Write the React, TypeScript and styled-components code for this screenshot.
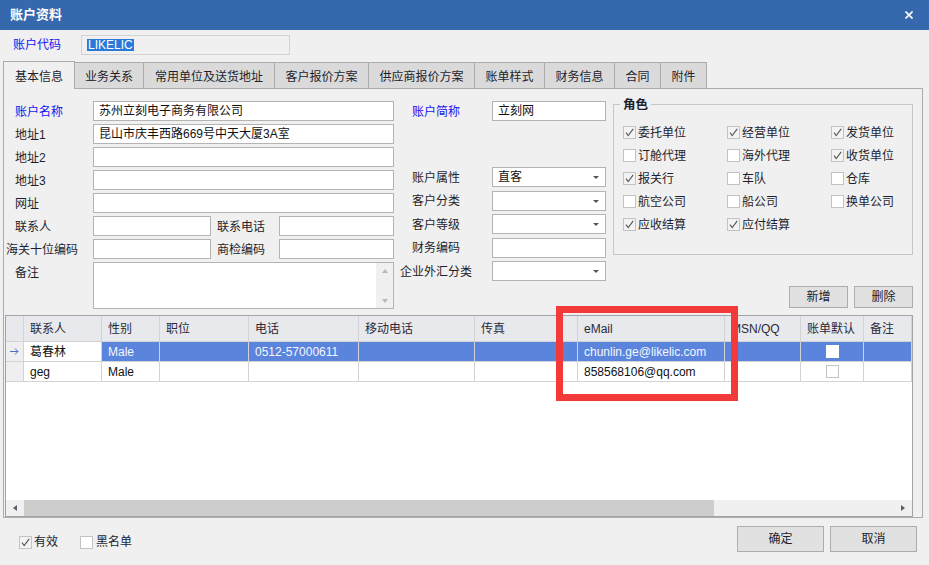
import React from "react";
import styled, { createGlobalStyle } from "styled-components";

const GlobalStyle = createGlobalStyle`
  html, body {
    margin: 0;
    padding: 0;
    background: #f0f0f0;
  }
  body {
    font-family: "Liberation Sans", "Noto Sans CJK SC", sans-serif;
    font-size: 12px;
    line-height: 16px;
    color: #1e1e2d;
  }
  * {
    box-sizing: border-box;
  }
`;

const Window = styled.div`
  position: relative;
  width: 929px;
  height: 565px;
  overflow: hidden;
  background: #f0f0f0;
  display: flex;
  flex-direction: column;
`;

const TitleBar = styled.div`
  height: 30px;
  flex: none;
  background: #3568ad;
  color: #fff;
  display: flex;
  align-items: center;
  justify-content: space-between;
  padding: 0 16px 0 10px;
  font-size: 13px;
  font-weight: bold;
`;

const CodeRow = styled.div`
  display: flex;
  align-items: center;
  height: 20px;
  margin-top: 5px;
  padding-left: 13px;
`;

const CodeLabel = styled.span`
  width: 68px;
  color: #1414f0;
`;

const CodeInput = styled.div`
  width: 209px;
  height: 20px;
  border: 1px solid #d2d2d2;
  background: #f0f0f0;
  padding-left: 5px;
  display: flex;
  align-items: center;
`;

const Selected = styled.span`
  background: #2a79d8;
  color: #fff;
  line-height: 12px;
  padding: 0 1px;
`;

const TabStrip = styled.div`
  display: flex;
  align-items: flex-end;
  height: 27px;
  margin-top: 6px;
  padding-left: 3px;
  flex: none;
`;

const Tab = styled.div<{ $active?: boolean; $w: number }>`
  position: relative;
  display: flex;
  align-items: center;
  justify-content: center;
  width: ${(p) => p.$w}px;
  padding-top: 2px;
  height: ${(p) => (p.$active ? 28 : 26)}px;
  margin-left: ${(p) => (p.$active ? 0 : -1)}px;
  margin-bottom: ${(p) => (p.$active ? -1 : 0)}px;
  border: 1px solid #acacac;
  border-bottom: none;
  background: ${(p) => (p.$active ? "#f0f0f0" : "#dadada")};
  z-index: ${(p) => (p.$active ? 2 : 1)};
  white-space: nowrap;
`;

const Panel = styled.div`
  margin: 0 6px 0 3px;
  height: 430px;
  flex: none;
  border: 1px solid #acacac;
  padding-top: 12px;
  display: flex;
  flex-direction: column;
`;

const TopArea = styled.div`
  display: flex;
  height: 208px;
  flex: none;
`;

const LeftForm = styled.div`
  display: grid;
  grid-template-columns: 89px 118px 68px 115px;
  grid-template-rows: repeat(7, 20px) 47px;
  row-gap: 3px;
`;

const FormLabel = styled.div<{ $blue?: boolean; $pull?: number; $pad?: number; $top?: boolean }>`
  display: flex;
  align-items: ${(p) => (p.$top ? "flex-start" : "center")};
  padding-top: ${(p) => (p.$top ? 3 : 1)}px;
  padding-left: ${(p) => p.$pad ?? 11}px;
  margin-left: ${(p) => -(p.$pull ?? 0)}px;
  white-space: nowrap;
  color: ${(p) => (p.$blue ? "#1414f0" : "#1e1e2d")};
`;

const Field = styled.div<{ $span?: string }>`
  grid-column: ${(p) => p.$span ?? "auto"};
  position: relative;
  background: #fff;
  border: 1px solid #b4b4b4;
  padding-left: 5px;
  display: flex;
  align-items: center;
  white-space: nowrap;
  overflow: hidden;
  color: #111;
`;

const DropArrow = styled.span`
  position: absolute;
  right: 6px;
  top: 8px;
  width: 0;
  height: 0;
  border-left: 3px solid transparent;
  border-right: 3px solid transparent;
  border-top: 3px solid #555;
`;

const MemoScroll = styled.div`
  margin-left: auto;
  align-self: stretch;
  width: 17px;
  background: #f0f0f0;
  display: flex;
  flex-direction: column;
  justify-content: space-between;
  align-items: center;
  padding: 6px 0 5px;
`;

const ScrollTri = styled.span<{ $dir: "up" | "down" | "left" | "right"; $color?: string }>`
  width: 0;
  height: 0;
  ${(p) => {
    const c = p.$color ?? "#b8b8b8";
    if (p.$dir === "up")
      return `border-left:3px solid transparent;border-right:3px solid transparent;border-bottom:4px solid ${c};`;
    if (p.$dir === "down")
      return `border-left:3px solid transparent;border-right:3px solid transparent;border-top:4px solid ${c};`;
    if (p.$dir === "left")
      return `border-top:3px solid transparent;border-bottom:3px solid transparent;border-right:4px solid ${c};`;
    return `border-top:3px solid transparent;border-bottom:3px solid transparent;border-left:4px solid ${c};`;
  }}
`;

const MiddleForm = styled.div`
  width: 212px;
  display: flex;
  flex-direction: column;
  gap: 3.5px;
`;

const MidRow = styled.div`
  display: grid;
  grid-template-columns: 98px 114px;
  height: 20px;
`;

const MidSpacer = styled.div`
  height: 39px;
`;

const RightCol = styled.div`
  width: 300px;
  margin-left: 7px;
  display: flex;
  flex-direction: column;
  justify-content: space-between;
  padding: 3px 0 1px;
`;

const GroupBox = styled.div`
  position: relative;
  height: 151px;
  border: 1px solid #c6c6c6;
  padding: 16px 0 0 9px;
`;

const Legend = styled.span`
  position: absolute;
  top: -8px;
  left: 6px;
  padding: 0 3px;
  background: #f0f0f0;
  font-weight: bold;
  font-size: 12.5px;
  line-height: 16px;
`;

const RoleGrid = styled.div`
  display: grid;
  grid-template-columns: 104px 104px 1fr;
  grid-auto-rows: 23px;
`;

const CheckItem = styled.label<{ $gap?: number }>`
  display: flex;
  align-items: center;
  gap: ${(p) => p.$gap ?? 2}px;
  white-space: nowrap;
`;

const Box = styled.span<{ $checked?: boolean; $plain?: boolean }>`
  width: 13px;
  height: 13px;
  flex: none;
  border: 1px solid ${(p) => (p.$plain ? "#fff" : "#c3c3c3")};
  background: ${(p) => (p.$checked ? "#f3f3f3" : "#fff")};
  display: inline-flex;
  align-items: center;
  justify-content: center;
`;

const ButtonRow = styled.div`
  display: flex;
  justify-content: flex-end;
  gap: 6px;
`;

const Button = styled.div<{ $large?: boolean }>`
  width: ${(p) => (p.$large ? 87 : 59)}px;
  height: ${(p) => (p.$large ? 26 : 22)}px;
  background: #e1e1e1;
  border: 1px solid #adadad;
  display: flex;
  align-items: center;
  justify-content: center;
  color: #1e1e2d;
`;

const DataGrid = styled.div`
  margin: 6px 0 0 1px;
  width: 908px;
  height: 202px;
  border: 1px solid #a3a3a6;
  background: #fff;
  display: flex;
  flex-direction: column;
`;

const GridRow = styled.div<{ $header?: boolean }>`
  display: grid;
  grid-template-columns: 18px 78px 58px 89px 110px 116px 103px 147px 76px 63px 1fr;
  height: ${(p) => (p.$header ? 26 : 20)}px;
  flex: none;
`;

const Cell = styled.div<{
  $kind?: "header" | "indicator" | "selected" | "plain";
  $center?: boolean;
}>`
  border-right: 1px solid #d3d3d6;
  border-bottom: 1px solid #d3d3d6;
  padding-left: ${(p) => (p.$center ? 0 : 6)}px;
  padding-top: ${(p) => (p.$kind === "header" ? 1 : 0)}px;
  display: flex;
  align-items: center;
  justify-content: ${(p) => (p.$center ? "center" : "flex-start")};
  white-space: nowrap;
  overflow: hidden;
  background: ${(p) =>
    p.$kind === "header"
      ? "#e8e9ec"
      : p.$kind === "indicator"
      ? "#efeff1"
      : p.$kind === "selected"
      ? "#5b84dd"
      : "#fff"};
  color: ${(p) => (p.$kind === "selected" ? "#f4f7ff" : p.$kind === "header" ? "#2a2a3a" : "#111")};
`;

const GridFill = styled.div`
  flex: 1;
`;

const HScroll = styled.div`
  height: 16px;
  flex: none;
  display: flex;
  background: #f0f0f0;
`;

const ScrollBtn = styled.div`
  width: 18px;
  display: flex;
  align-items: center;
  justify-content: center;
`;

const ScrollThumb = styled.div<{ $w: number }>`
  width: ${(p) => p.$w}px;
  background: #cdcdcd;
`;

const ScrollTrack = styled.div`
  flex: 1;
`;

const BottomBar = styled.div`
  flex: 1;
  display: flex;
  justify-content: space-between;
  align-items: flex-start;
  padding: 8px 12px 0 19px;
`;

const BottomChecks = styled.div`
  display: flex;
  gap: 22px;
  margin-top: 8px;
`;

const Highlight = styled.div`
  position: absolute;
  left: 556px;
  top: 306px;
  width: 182px;
  height: 95px;
  border: 7px solid #f33a3a;
  pointer-events: none;
`;

const Check = ({ checked, plain }: { checked?: boolean; plain?: boolean }) => (
  <Box $checked={checked} $plain={plain}>
    {checked && (
      <svg width="9" height="9" viewBox="0 0 9 9">
        <path d="M1 4.6 L3.2 7.6 L8.2 0.8" stroke="#555" strokeWidth="1.1" fill="none" />
      </svg>
    )}
  </Box>
);

const tabs: [string, number][] = [
  ["基本信息", 72],
  ["业务关系", 70],
  ["常用单位及送货地址", 132],
  ["客户报价方案", 95],
  ["供应商报价方案", 107],
  ["账单样式", 71],
  ["财务信息", 71],
  ["合同", 47],
  ["附件", 47],
];

const roles: [string, boolean][] = [
  ["委托单位", true],
  ["经营单位", true],
  ["发货单位", true],
  ["订舱代理", false],
  ["海外代理", false],
  ["收货单位", true],
  ["报关行", true],
  ["车队", false],
  ["仓库", false],
  ["航空公司", false],
  ["船公司", false],
  ["换单公司", false],
  ["应收结算", true],
  ["应付结算", true],
];

const headers = ["联系人", "性别", "职位", "电话", "移动电话", "传真", "eMail", "MSN/QQ", "账单默认", "备注"];

const contacts = [
  { name: "葛春林", sex: "Male", phone: "0512-57000611", email: "chunlin.ge@likelic.com", selected: true },
  { name: "geg", sex: "Male", phone: "", email: "858568106@qq.com", selected: false },
];

const RowArrow = () => (
  <svg width="9" height="7" viewBox="0 0 9 7">
    <path d="M0 3.5 H8 M5 0.5 L8 3.5 L5 6.5" stroke="#4a70c8" strokeWidth="1" fill="none" />
  </svg>
);

export default function App() {
  return (
    <Window>
      <GlobalStyle />
      <TitleBar>
        <span>账户资料</span>
        <svg width="8" height="8" viewBox="0 0 8 8">
          <path d="M0.5 0.5 L7.5 7.5 M7.5 0.5 L0.5 7.5" stroke="#fff" strokeWidth="1.6" />
        </svg>
      </TitleBar>

      <CodeRow>
        <CodeLabel>账户代码</CodeLabel>
        <CodeInput>
          <Selected>LIKELIC</Selected>
        </CodeInput>
      </CodeRow>

      <TabStrip>
        {tabs.map(([t, w], i) => (
          <Tab key={t} $active={i === 0} $w={w}>
            {t}
          </Tab>
        ))}
      </TabStrip>

      <Panel>
        <TopArea>
          <LeftForm>
            <FormLabel $blue>账户名称</FormLabel>
            <Field $span="2 / 5">苏州立刻电子商务有限公司</Field>
            <FormLabel>地址1</FormLabel>
            <Field $span="2 / 5">昆山市庆丰西路669号中天大厦3A室</Field>
            <FormLabel>地址2</FormLabel>
            <Field $span="2 / 5" />
            <FormLabel>地址3</FormLabel>
            <Field $span="2 / 5" />
            <FormLabel>网址</FormLabel>
            <Field $span="2 / 5" />
            <FormLabel>联系人</FormLabel>
            <Field />
            <FormLabel $pad={6}>联系电话</FormLabel>
            <Field />
            <FormLabel $pull={9}>海关十位编码</FormLabel>
            <Field />
            <FormLabel $pad={6}>商检编码</FormLabel>
            <Field />
            <FormLabel $top>备注</FormLabel>
            <Field $span="2 / 5">
              <MemoScroll>
                <ScrollTri $dir="up" />
                <ScrollTri $dir="down" />
              </MemoScroll>
            </Field>
          </LeftForm>

          <MiddleForm>
            <MidRow>
              <FormLabel $blue $pad={18}>账户简称</FormLabel>
              <Field>立刻网</Field>
            </MidRow>
            <MidSpacer />
            <MidRow>
              <FormLabel $pad={18}>账户属性</FormLabel>
              <Field>
                直客
                <DropArrow />
              </Field>
            </MidRow>
            <MidRow>
              <FormLabel $pad={18}>客户分类</FormLabel>
              <Field>
                <DropArrow />
              </Field>
            </MidRow>
            <MidRow>
              <FormLabel $pad={18}>客户等级</FormLabel>
              <Field>
                <DropArrow />
              </Field>
            </MidRow>
            <MidRow>
              <FormLabel $pad={18}>财务编码</FormLabel>
              <Field />
            </MidRow>
            <MidRow>
              <FormLabel $pad={18} $pull={12}>企业外汇分类</FormLabel>
              <Field>
                <DropArrow />
              </Field>
            </MidRow>
          </MiddleForm>

          <RightCol>
            <GroupBox>
              <Legend>角色</Legend>
              <RoleGrid>
                {roles.map(([name, on]) => (
                  <CheckItem key={name}>
                    <Check checked={on} />
                    {name}
                  </CheckItem>
                ))}
              </RoleGrid>
            </GroupBox>
            <ButtonRow>
              <Button>新增</Button>
              <Button>删除</Button>
            </ButtonRow>
          </RightCol>
        </TopArea>

        <DataGrid>
          <GridRow $header>
            <Cell $kind="header" />
            {headers.map((h) => (
              <Cell key={h} $kind="header">
                {h}
              </Cell>
            ))}
          </GridRow>
          {contacts.map((c) => {
            const kind = c.selected ? "selected" : "plain";
            return (
              <GridRow key={c.name}>
                <Cell $kind="indicator" $center>
                  {c.selected && <RowArrow />}
                </Cell>
                <Cell $kind="plain">{c.name}</Cell>
                <Cell $kind={kind}>{c.sex}</Cell>
                <Cell $kind={kind} />
                <Cell $kind={kind}>{c.phone}</Cell>
                <Cell $kind={kind} />
                <Cell $kind={kind} />
                <Cell $kind={kind}>{c.email}</Cell>
                <Cell $kind={kind} />
                <Cell $kind={kind} $center>
                  <Check plain={c.selected} />
                </Cell>
                <Cell $kind={kind} />
              </GridRow>
            );
          })}
          <GridFill />
          <HScroll>
            <ScrollBtn>
              <ScrollTri $dir="left" $color="#5c5c6c" />
            </ScrollBtn>
            <ScrollThumb $w={690} />
            <ScrollTrack />
            <ScrollBtn>
              <ScrollTri $dir="right" $color="#5c5c6c" />
            </ScrollBtn>
          </HScroll>
        </DataGrid>
      </Panel>

      <BottomBar>
        <BottomChecks>
          <CheckItem $gap={2}>
            <Check checked />
            有效
          </CheckItem>
          <CheckItem $gap={3}>
            <Check />
            黑名单
          </CheckItem>
        </BottomChecks>
        <ButtonRow>
          <Button $large>确定</Button>
          <Button $large>取消</Button>
        </ButtonRow>
      </BottomBar>

      <Highlight />
    </Window>
  );
}
